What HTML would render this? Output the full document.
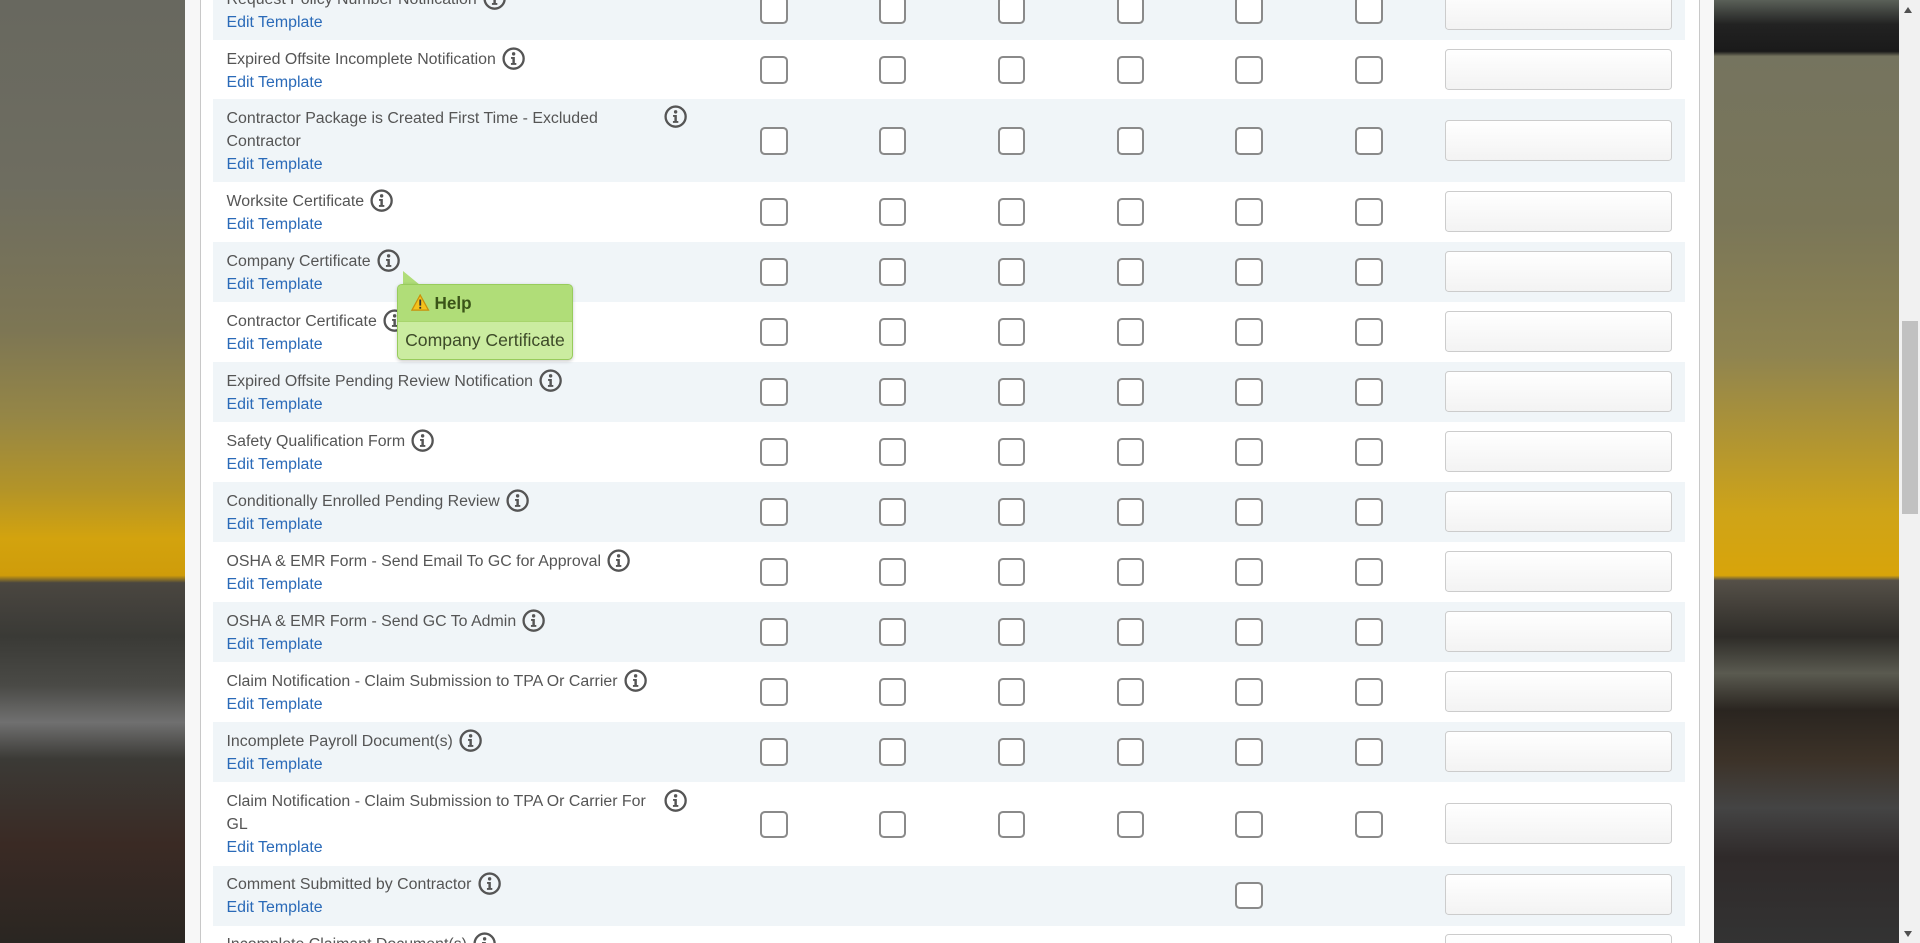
<!DOCTYPE html>
<html><head><meta charset="utf-8">
<style>
html,body{margin:0;padding:0;overflow:hidden;width:1920px;height:942px;}
#w{position:absolute;left:0;top:0;width:1568px;height:770px;zoom:1.22449;overflow:hidden;font-family:"Liberation Sans",Arial,sans-serif;}
.bgl{position:absolute;left:0;top:0;width:151px;height:770px;background:
 linear-gradient(180deg,#68685f 0px,#6e6d60 150px,#7d7654 270px,#958646 340px,#b39428 400px,#d3a30e 440px,#cf9c0a 470px,#4a4640 476px,#3a3a36 520px,#4a4a46 560px,#707070 590px,#3b3a36 620px,#3a2a24 690px,#2a2622 770px);}
.bgr{position:absolute;left:1400px;top:0;width:151px;height:770px;background:
 linear-gradient(180deg,#5a6058 0px,#222 20px,#1a1a1a 42px,#75745f 46px,#7a7658 180px,#8f8450 290px,#b19532 360px,#cfa418 420px,#d8a40a 470px,#555048 474px,#2e2c28 520px,#5a5a50 550px,#2a2520 580px,#3c3228 620px,#444 660px,#2f2a2a 700px,#333 770px);}
.sb{position:absolute;left:1551px;top:0;width:17px;height:770px;background:#f1f1f1;}
.th{position:absolute;left:1553px;top:262px;width:13px;height:158px;background:#c1c1c1;}
.panel{position:absolute;left:151px;top:0;width:1249px;height:770px;background:#f7f7f7;}
.inner{position:absolute;left:163px;top:0;width:1224px;height:770px;background:#fff;border-left:1px solid #c8c8c8;border-right:1px solid #c8c8c8;}
.row{position:absolute;left:174px;width:1202px;height:49px;}
.s{background:#f0f5f8;}
.nm{position:absolute;left:11px;top:6px;font-size:13px;line-height:19px;color:#555;}
.nm .t{display:inline-block;vertical-align:top;}
.nm a{display:block;color:#2a6ab8;text-decoration:none;}
.ic{display:inline-block;vertical-align:top;margin-left:5px;margin-top:-1px;width:19px;height:19px;}
.cb{position:absolute;top:13px;width:19px;height:19px;border:2px solid #8a8a8a;border-radius:4px;background:#fff;}
.in{position:absolute;left:1006px;top:7px;width:184px;height:32px;border:1px solid #ccc;border-radius:3px;background:linear-gradient(#fff,#f3f3f3);}
.tall{height:68px;}
.tall .cb{top:23px;}
.tall .in{top:17px;}
.tip{position:absolute;left:324px;top:232px;width:142px;height:60px;border:1px solid #98cc5c;border-radius:4px;background:#cbeca0;box-shadow:0 1px 3px rgba(0,0,0,.2);}
.tip .h{height:29px;background:#b0dd78;border-bottom:1px solid #a8d56c;border-radius:3px 3px 0 0;font-weight:bold;font-size:14px;line-height:31px;color:#3a5418;padding-left:11px;}
.tip .b{font-size:14.4px;color:#3d4a28;padding-left:6px;line-height:31px;white-space:nowrap;}
.arr{position:absolute;left:329px;top:221px;width:0;height:0;border-left:0 solid transparent;border-right:14px solid transparent;border-bottom:12px solid #b0dd78;}
</style></head><body><div id="w">
<div class="bgl"></div><div class="bgr"></div><div class="sb"><div style="position:absolute;left:4px;top:6px;border:4px solid transparent;border-bottom:5px solid #505050;border-top:0"></div><div style="position:absolute;left:4px;top:760px;border:4px solid transparent;border-top:5px solid #505050;border-bottom:0"></div></div><div class="th"></div>
<div class="panel"></div><div class="inner"></div>

<svg width="0" height="0" style="position:absolute"><defs><symbol id="i" viewBox="0 0 19 19"><circle cx="9.5" cy="9.5" r="8.2" fill="none" stroke="#555" stroke-width="1.9"/><circle cx="9.5" cy="5.6" r="1.4" fill="#555"/><path d="M7.4 8.2h3.1v4.9h1.2v1.5H7.3v-1.5h1.2V9.7H7.4z" fill="#555"/></symbol></defs></svg>

<div class="row s" style="top:-16px"><div class="nm"><span class="t">Request Policy Number Notification</span><svg class="ic"><use href="#i"/></svg><a>Edit Template</a></div>
<div class="cb" style="left:447px"></div><div class="cb" style="left:544px"></div><div class="cb" style="left:641px"></div><div class="cb" style="left:738px"></div><div class="cb" style="left:835px"></div><div class="cb" style="left:933px"></div><div class="in"></div></div>

<div class="row" style="top:33px;height:48px"><div class="nm"><span class="t">Expired Offsite Incomplete Notification</span><svg class="ic"><use href="#i"/></svg><a>Edit Template</a></div>
<div class="cb" style="left:447px"></div><div class="cb" style="left:544px"></div><div class="cb" style="left:641px"></div><div class="cb" style="left:738px"></div><div class="cb" style="left:835px"></div><div class="cb" style="left:933px"></div><div class="in"></div></div>

<div class="row s tall" style="top:81px"><div class="nm"><span class="t" style="width:352px">Contractor Package is Created First Time - Excluded Contractor</span><svg class="ic"><use href="#i"/></svg><a>Edit Template</a></div>
<div class="cb" style="left:447px"></div><div class="cb" style="left:544px"></div><div class="cb" style="left:641px"></div><div class="cb" style="left:738px"></div><div class="cb" style="left:835px"></div><div class="cb" style="left:933px"></div><div class="in"></div></div>

<div class="row" style="top:149px"><div class="nm"><span class="t">Worksite Certificate</span><svg class="ic"><use href="#i"/></svg><a>Edit Template</a></div>
<div class="cb" style="left:447px"></div><div class="cb" style="left:544px"></div><div class="cb" style="left:641px"></div><div class="cb" style="left:738px"></div><div class="cb" style="left:835px"></div><div class="cb" style="left:933px"></div><div class="in"></div></div>

<div class="row s" style="top:198px"><div class="nm"><span class="t">Company Certificate</span><svg class="ic"><use href="#i"/></svg><a>Edit Template</a></div>
<div class="cb" style="left:447px"></div><div class="cb" style="left:544px"></div><div class="cb" style="left:641px"></div><div class="cb" style="left:738px"></div><div class="cb" style="left:835px"></div><div class="cb" style="left:933px"></div><div class="in"></div></div>

<div class="row" style="top:247px"><div class="nm"><span class="t">Contractor Certificate</span><svg class="ic"><use href="#i"/></svg><a>Edit Template</a></div>
<div class="cb" style="left:447px"></div><div class="cb" style="left:544px"></div><div class="cb" style="left:641px"></div><div class="cb" style="left:738px"></div><div class="cb" style="left:835px"></div><div class="cb" style="left:933px"></div><div class="in"></div></div>

<div class="row s" style="top:296px"><div class="nm"><span class="t">Expired Offsite Pending Review Notification</span><svg class="ic"><use href="#i"/></svg><a>Edit Template</a></div>
<div class="cb" style="left:447px"></div><div class="cb" style="left:544px"></div><div class="cb" style="left:641px"></div><div class="cb" style="left:738px"></div><div class="cb" style="left:835px"></div><div class="cb" style="left:933px"></div><div class="in"></div></div>

<div class="row" style="top:345px"><div class="nm"><span class="t">Safety Qualification Form</span><svg class="ic"><use href="#i"/></svg><a>Edit Template</a></div>
<div class="cb" style="left:447px"></div><div class="cb" style="left:544px"></div><div class="cb" style="left:641px"></div><div class="cb" style="left:738px"></div><div class="cb" style="left:835px"></div><div class="cb" style="left:933px"></div><div class="in"></div></div>

<div class="row s" style="top:394px"><div class="nm"><span class="t">Conditionally Enrolled Pending Review</span><svg class="ic"><use href="#i"/></svg><a>Edit Template</a></div>
<div class="cb" style="left:447px"></div><div class="cb" style="left:544px"></div><div class="cb" style="left:641px"></div><div class="cb" style="left:738px"></div><div class="cb" style="left:835px"></div><div class="cb" style="left:933px"></div><div class="in"></div></div>

<div class="row" style="top:443px"><div class="nm"><span class="t">OSHA &amp; EMR Form - Send Email To GC for Approval</span><svg class="ic"><use href="#i"/></svg><a>Edit Template</a></div>
<div class="cb" style="left:447px"></div><div class="cb" style="left:544px"></div><div class="cb" style="left:641px"></div><div class="cb" style="left:738px"></div><div class="cb" style="left:835px"></div><div class="cb" style="left:933px"></div><div class="in"></div></div>

<div class="row s" style="top:492px"><div class="nm"><span class="t">OSHA &amp; EMR Form - Send GC To Admin</span><svg class="ic"><use href="#i"/></svg><a>Edit Template</a></div>
<div class="cb" style="left:447px"></div><div class="cb" style="left:544px"></div><div class="cb" style="left:641px"></div><div class="cb" style="left:738px"></div><div class="cb" style="left:835px"></div><div class="cb" style="left:933px"></div><div class="in"></div></div>

<div class="row" style="top:541px"><div class="nm"><span class="t">Claim Notification - Claim Submission to TPA Or Carrier</span><svg class="ic"><use href="#i"/></svg><a>Edit Template</a></div>
<div class="cb" style="left:447px"></div><div class="cb" style="left:544px"></div><div class="cb" style="left:641px"></div><div class="cb" style="left:738px"></div><div class="cb" style="left:835px"></div><div class="cb" style="left:933px"></div><div class="in"></div></div>

<div class="row s" style="top:590px"><div class="nm"><span class="t">Incomplete Payroll Document(s)</span><svg class="ic"><use href="#i"/></svg><a>Edit Template</a></div>
<div class="cb" style="left:447px"></div><div class="cb" style="left:544px"></div><div class="cb" style="left:641px"></div><div class="cb" style="left:738px"></div><div class="cb" style="left:835px"></div><div class="cb" style="left:933px"></div><div class="in"></div></div>

<div class="row tall" style="top:639px"><div class="nm"><span class="t" style="width:352px">Claim Notification - Claim Submission to TPA Or Carrier For<br>GL</span><svg class="ic"><use href="#i"/></svg><a>Edit Template</a></div>
<div class="cb" style="left:447px"></div><div class="cb" style="left:544px"></div><div class="cb" style="left:641px"></div><div class="cb" style="left:738px"></div><div class="cb" style="left:835px"></div><div class="cb" style="left:933px"></div><div class="in"></div></div>

<div class="row s" style="top:707px"><div class="nm"><span class="t">Comment Submitted by Contractor</span><svg class="ic"><use href="#i"/></svg><a>Edit Template</a></div>
<div class="cb" style="left:835px"></div><div class="in"></div></div>

<div class="row" style="top:756px"><div class="nm"><span class="t">Incomplete Claimant Document(s)</span><svg class="ic"><use href="#i"/></svg><a>Edit Template</a></div>
<div class="in"></div></div>

<div class="arr"></div>
<div class="tip"><div class="h"><svg width="15" height="14" viewBox="0 0 15 14" style="vertical-align:-2px;margin-right:4px"><path d="M7.5 0.8L14.3 13.2H0.7z" fill="#f4c21c" stroke="#c9900a" stroke-width="1"/><rect x="6.8" y="4.5" width="1.5" height="5" fill="#333"/><rect x="6.8" y="10.5" width="1.5" height="1.5" fill="#333"/></svg>Help</div><div class="b">Company Certificate</div></div>
</div></body></html>
